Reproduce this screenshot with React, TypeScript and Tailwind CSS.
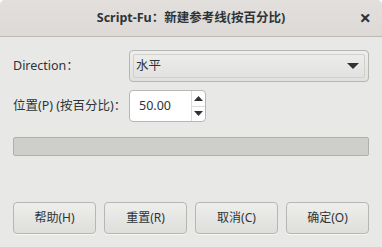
const font = { fontFamily: '"Noto Sans", "Noto Sans CJK SC", sans-serif' };

function Button({ label }: { label: string }) {
  return (
    <button className="h-[32px] w-[83px] rounded-[4px] border border-[#b6b6b3] bg-gradient-to-b from-[#eeeeec] to-[#dededb] text-[12px] text-[#2e3436] shadow-[0_1px_0_rgba(255,255,255,0.6)]">
      {label}
    </button>
  );
}

export default function App() {
  return (
    <div style={font} className="h-[247px] w-[382px] overflow-hidden rounded-t-[5px] bg-[#e8e8e7] text-[#2e3436]">
      <div className="relative flex h-[37px] items-center justify-center border-b border-[#bfb8b1] bg-gradient-to-b from-[#e2dfdc] to-[#dcd9d6]">
        <span className="text-[12.5px] font-bold text-[#2e3436]">Script-Fu：新建参考线(按百分比)</span>
        <span className="absolute right-[11px] top-[7px] text-[20px] font-bold leading-[22px] text-[#2e3436]">×</span>
      </div>

      <div className="px-[13px] pt-[13px]">
        <div className="flex items-center">
          <span className="w-[116px] shrink-0 whitespace-nowrap text-[12.5px]">Direction：</span>
          <div className="flex h-[32px] flex-1 items-center rounded-[4px] border border-[#b6b6b3] bg-gradient-to-b from-[#eeeeec] to-[#e0e0de] p-[3px]">
            <div className="flex h-[24px] flex-1 items-center justify-between rounded-[2px] border border-[#cfcfcc] px-[2px]">
              <span className="text-[12.5px]">水平</span>
              <svg width="12" height="7" viewBox="0 0 12 7" className="mr-[3px]">
                <path d="M0 0 H12 L6 6 Z" fill="#2e3436" />
              </svg>
            </div>
          </div>
        </div>

        <div className="mt-[8px] flex items-center">
          <span className="w-[116px] shrink-0 whitespace-nowrap text-[12.5px]">位置(P) (按百分比)：</span>
          <div className="flex h-[32px] w-[77px] rounded-[4px] border border-[#b6b6b3] bg-white">
            <div className="flex flex-1 items-center pl-[9px] text-[12.5px]">50.00</div>
            <div className="flex w-[14px] flex-col border-l border-[#dcdcda]">
              <div className="flex flex-1 items-center justify-center border-b border-[#dcdcda]">
                <svg width="9" height="5" viewBox="0 0 9 5"><path d="M0 5 H9 L4.5 0 Z" fill="#2e3436" /></svg>
              </div>
              <div className="flex flex-1 items-center justify-center">
                <svg width="9" height="5" viewBox="0 0 9 5"><path d="M0 0 H9 L4.5 5 Z" fill="#2e3436" /></svg>
              </div>
            </div>
          </div>
        </div>

        <div className="mt-[15px] h-[19px] rounded-[2px] border border-[#b0b0ad] bg-[#cececb]" />

        <div className="mt-[46px] flex gap-[8px]">
          <Button label="帮助(H)" />
          <Button label="重置(R)" />
          <Button label="取消(C)" />
          <Button label="确定(O)" />
        </div>
      </div>
    </div>
  );
}
